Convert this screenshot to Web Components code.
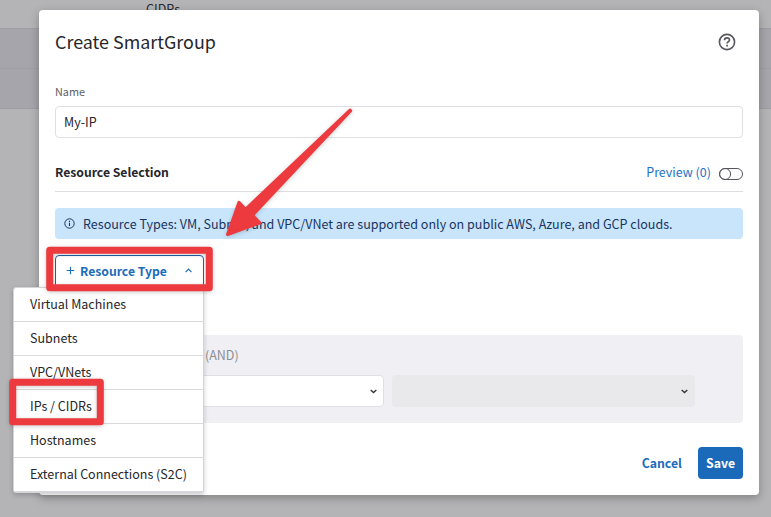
<!DOCTYPE html>
<html lang="en">
<head>
<meta charset="utf-8">
<title>Create SmartGroup</title>
<style>
html,body{margin:0;height:100%}
body{position:relative;width:771px;height:517px;overflow:hidden;background:#b4b4b6;color:#25262c;font-family:"Noto Sans CJK SC","Noto Sans",sans-serif;font-size:12.5px;line-height:18px}
</style>
</head>
<body>
<page-backdrop>CIDRs</page-backdrop>
<smart-dialog>
  <dialog-header slot="header">Create SmartGroup</dialog-header>
  <text-field label="Name">My-IP</text-field>
  <section-head action="Preview (0)">Resource Selection</section-head>
  <info-banner>Resource Types: VM, Subnet, and VPC/VNet are supported only on public AWS, Azure, and GCP clouds.</info-banner>
  <type-button>Resource Type</type-button>
  <condition-panel>(AND)</condition-panel>
  <action-bar slot="footer"></action-bar>
</smart-dialog>
<drop-menu>
  <menu-item>Virtual Machines</menu-item>
  <menu-item>Subnets</menu-item>
  <menu-item>VPC/VNets</menu-item>
  <menu-item>IPs / CIDRs</menu-item>
  <menu-item>Hostnames</menu-item>
  <menu-item>External Connections (S2C)</menu-item>
</drop-menu>
<mark-up></mark-up>
<script>
const define = (name, html) => {
  const t = document.createElement('template');
  t.innerHTML = '<style>:host{box-sizing:border-box;flex:none}*{box-sizing:border-box}svg{display:block;flex:none}</style>' + html;
  customElements.define(name, class extends HTMLElement {
    connectedCallback() {
      const root = this.attachShadow({ mode: 'open' });
      root.append(t.content.cloneNode(true));
      root.querySelectorAll('[data-attr]').forEach(e => e.textContent = this.getAttribute(e.dataset.attr));
    }
  });
};
define('page-backdrop', `<style>
:host{display:block;position:absolute;inset:0;color:#2a2a2e}
.t{height:28px;padding-left:146px;line-height:17px}
.r{height:40px;background:#a6a5ab;border-top:1px solid #9f9ea5}
.r+.r{height:41px;border-bottom:1px solid #9f9ea5}
</style><div class="t"><slot></slot></div><div class="r"></div><div class="r"></div>`);
define('smart-dialog', `<style>
:host{display:flex;flex-direction:column;position:absolute;left:39px;top:10px;width:720px;height:485px;padding:16px;background:#fff;border-radius:4px;box-shadow:0 3px 10px rgba(0,0,0,.28)}
</style><slot name="header"></slot><slot></slot><slot name="footer"></slot>`);
define('dialog-header', `<style>
:host{display:flex;justify-content:space-between;align-items:center;height:32px;padding-right:7px;font-size:17.9px;line-height:26px}
b{font-weight:400;padding-bottom:2px}
</style><b><slot></slot></b><svg width="18" height="18" viewBox="0 0 18 18" fill="none" stroke="#56565e"><circle cx="9" cy="9" r="7.6" stroke-width="1.6"/><path d="M6.5 7.2C6.5 5.7 7.5 4.9 9 4.9s2.5.9 2.5 2.1c0 1.6-2.4 1.7-2.4 3.6" stroke-width="1.6"/><path d="M9.1 11.7v1.7" stroke-width="1.7"/></svg>`);
define('text-field', `<style>
:host{display:block;padding-top:24px}
label{display:block;height:24px;line-height:18px;font-size:10.9px;color:#5f6068}
div{height:32px;border:1px solid #e0e0e4;border-radius:4px;padding:0 8px;line-height:30px}
</style><label data-attr="label"></label><div><slot></slot></div>`);
define('section-head', `<style>
:host{display:flex;align-items:center;height:38px;margin-top:16px;padding-bottom:2px;border-bottom:1px solid #dedee2;font-weight:700;font-size:12.2px}
span{margin-left:auto;margin-right:8px;color:#1f72c4;font-weight:400;font-size:12.5px}
svg{margin-top:5px}
</style><slot></slot><span data-attr="action"></span><svg width="24" height="12" viewBox="0 0 24 12" fill="none" stroke="#55555c"><rect x=".5" y=".5" width="23" height="11" rx="5.5"/><circle cx="6.1" cy="6" r="5.5"/></svg>`);
define('info-banner', `<style>
:host{display:flex;align-items:center;gap:8.5px;height:31px;margin-top:16px;padding-left:8.5px;border-radius:4px;background:#c9e5fc;color:#18345f;white-space:nowrap;font-size:12.54px}
</style><svg width="11" height="11" viewBox="0 0 11 11" fill="none" stroke="#18345f" stroke-width="1"><circle cx="5.5" cy="5.5" r="4.7"/><path d="M5.5 4.7v3.3M5.5 2.8v1.1" stroke-width="1.1"/></svg><slot></slot>`);
define('type-button', `<style>
:host{display:flex;align-items:center;width:149px;height:33px;margin-top:16px;padding:0 11px 2px 10px;border:1px solid #1d62a8;border-radius:4px;color:#1c6cbc;font-weight:700;font-size:12.2px}
svg:first-of-type{margin-right:5px}
svg:last-of-type{margin-left:auto}
</style><svg width="9" height="9" viewBox="0 0 9 9" stroke="#1c6cbc" stroke-width="1.1"><path d="M4.5.7v7.6M.7 4.5h7.6"/></svg><slot></slot><svg width="7" height="5" viewBox="0 0 7 5" fill="none" stroke="#1c6cbc" stroke-width="1.2"><path d="M.6 4.2 3.5 1.2l2.9 3"/></svg>`);
define('condition-panel', `<style>
:host{display:block;height:88px;margin-top:47px;border-radius:4px;background:#f0eff4;padding:11px 48px 16px 16px;color:#8e8e93}
.l{height:29px;padding-left:134px;line-height:17px}
.g{display:grid;grid-template-columns:313px 303px;gap:8px}
.g div{display:flex;align-items:center;justify-content:flex-end;height:32px;border:1px solid #e0e0e4;border-radius:4px;background:#fff;padding-right:6px}
.g .off{background:#e9e9eb;border-color:#e9e9eb}
</style><div class="l"><slot></slot></div><div class="g"><div><svg width="7" height="5" viewBox="0 0 7 5" fill="none" stroke="#333338" stroke-width="1.4"><path d="M.7 1 3.5 3.6 6.3 1"/></svg></div><div class="off"><svg width="7" height="5" viewBox="0 0 7 5" fill="none" stroke="#333338" stroke-width="1.4"><path d="M.7 1 3.5 3.6 6.3 1"/></svg></div></div>`);
define('action-bar', `<style>
:host{display:flex;justify-content:flex-end;align-items:center;gap:16px;margin-top:24px;font-weight:700;font-size:12.3px;color:#1c6cbc}
.s{display:flex;align-items:center;justify-content:center;width:45px;height:32px;border-radius:4px;background:#1b69b9;color:#fff}
</style><span>Cancel</span><div class="s">Save</div>`);
define('drop-menu', `<style>
:host{display:flex;flex-direction:column;position:absolute;left:13px;top:287px;width:191px;height:206px;background:#fff;border:1px solid #d3d3d8;border-radius:3px;box-shadow:0 2px 5px rgba(0,0,0,.2)}
</style><slot></slot>`);
define('menu-item', `<style>
:host{display:flex;align-items:center;height:34px;padding:0 0 2px 16px;border-bottom:1px solid #d9d9dc;color:#25262a;white-space:nowrap}
</style><slot></slot>`);
define('mark-up', `<style>
:host{position:absolute;inset:0;filter:drop-shadow(0 1px 2px rgba(0,0,0,.2))}
</style><svg width="771" height="517" fill="none" stroke="#ec3a3e" stroke-linejoin="round"><rect x="49.7" y="250.2" width="159.6" height="37.6" stroke-width="7"/><rect x="12.7" y="382.2" width="87.6" height="39.6" stroke-width="7"/><path fill="#ec3a3e" stroke-width="3" d="M350 110 350.7 110.7 252.6 215.2 259.8 222.8 227.5 234.5 239 202.3 245.5 209.3Z"/></svg>`);
</script>
</body>
</html>
